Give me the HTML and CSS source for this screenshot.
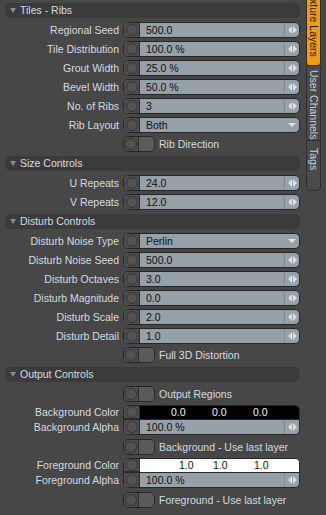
FILE: index.html
```html
<!DOCTYPE html>
<html lang="en">
<head>
    <meta charset="UTF-8">
    <title>Texture Layers</title>
    <link rel="stylesheet" href="styles.css">
</head>
<body>
<div class="app">
    <div class="panel">
        <!-- Tiles - Ribs -->
        <div class="group-head"><span class="caret"></span>Tiles - Ribs</div>
        <div class="row"><label>Regional Seed</label><div class="field"><span class="knob"></span><span class="value">500.0</span><span class="spin"><svg width="9" height="8" viewBox="0 0 9 8"><path d="M0 4 L4 0 L4 8 Z M5 0 L9 4 L5 8 Z" fill="#dde1e4"/></svg></span></div></div>
        <div class="row"><label>Tile Distribution</label><div class="field"><span class="knob"></span><span class="value">100.0 %</span><span class="spin"><svg width="9" height="8" viewBox="0 0 9 8"><path d="M0 4 L4 0 L4 8 Z M5 0 L9 4 L5 8 Z" fill="#dde1e4"/></svg></span></div></div>
        <div class="row"><label>Grout Width</label><div class="field"><span class="knob"></span><span class="value">25.0 %</span><span class="spin"><svg width="9" height="8" viewBox="0 0 9 8"><path d="M0 4 L4 0 L4 8 Z M5 0 L9 4 L5 8 Z" fill="#dde1e4"/></svg></span></div></div>
        <div class="row"><label>Bevel Width</label><div class="field"><span class="knob"></span><span class="value">50.0 %</span><span class="spin"><svg width="9" height="8" viewBox="0 0 9 8"><path d="M0 4 L4 0 L4 8 Z M5 0 L9 4 L5 8 Z" fill="#dde1e4"/></svg></span></div></div>
        <div class="row"><label>No. of Ribs</label><div class="field"><span class="knob"></span><span class="value">3</span><span class="spin"><svg width="9" height="8" viewBox="0 0 9 8"><path d="M0 4 L4 0 L4 8 Z M5 0 L9 4 L5 8 Z" fill="#dde1e4"/></svg></span></div></div>
        <div class="row"><label>Rib Layout</label><div class="field"><span class="knob"></span><span class="value">Both</span><span class="drop"></span></div></div>
        <div class="row"><label></label><div class="check"><div class="toggle"><span class="knob"></span><span class="slot"></span></div><span>Rib Direction</span></div></div>

        <!-- Size Controls -->
        <div class="group-head"><span class="caret"></span>Size Controls</div>
        <div class="row"><label>U Repeats</label><div class="field"><span class="knob"></span><span class="value">24.0</span><span class="spin"><svg width="9" height="8" viewBox="0 0 9 8"><path d="M0 4 L4 0 L4 8 Z M5 0 L9 4 L5 8 Z" fill="#dde1e4"/></svg></span></div></div>
        <div class="row"><label>V Repeats</label><div class="field"><span class="knob"></span><span class="value">12.0</span><span class="spin"><svg width="9" height="8" viewBox="0 0 9 8"><path d="M0 4 L4 0 L4 8 Z M5 0 L9 4 L5 8 Z" fill="#dde1e4"/></svg></span></div></div>

        <!-- Disturb Controls -->
        <div class="group-head"><span class="caret"></span>Disturb Controls</div>
        <div class="row"><label>Disturb Noise Type</label><div class="field"><span class="knob"></span><span class="value">Perlin</span><span class="drop"></span></div></div>
        <div class="row"><label>Disturb Noise Seed</label><div class="field"><span class="knob"></span><span class="value">500.0</span><span class="spin"><svg width="9" height="8" viewBox="0 0 9 8"><path d="M0 4 L4 0 L4 8 Z M5 0 L9 4 L5 8 Z" fill="#dde1e4"/></svg></span></div></div>
        <div class="row"><label>Disturb Octaves</label><div class="field"><span class="knob"></span><span class="value">3.0</span><span class="spin"><svg width="9" height="8" viewBox="0 0 9 8"><path d="M0 4 L4 0 L4 8 Z M5 0 L9 4 L5 8 Z" fill="#dde1e4"/></svg></span></div></div>
        <div class="row"><label>Disturb Magnitude</label><div class="field"><span class="knob"></span><span class="value">0.0</span><span class="spin"><svg width="9" height="8" viewBox="0 0 9 8"><path d="M0 4 L4 0 L4 8 Z M5 0 L9 4 L5 8 Z" fill="#dde1e4"/></svg></span></div></div>
        <div class="row"><label>Disturb Scale</label><div class="field"><span class="knob"></span><span class="value">2.0</span><span class="spin"><svg width="9" height="8" viewBox="0 0 9 8"><path d="M0 4 L4 0 L4 8 Z M5 0 L9 4 L5 8 Z" fill="#dde1e4"/></svg></span></div></div>
        <div class="row"><label>Disturb Detail</label><div class="field"><span class="knob"></span><span class="value">1.0</span><span class="spin"><svg width="9" height="8" viewBox="0 0 9 8"><path d="M0 4 L4 0 L4 8 Z M5 0 L9 4 L5 8 Z" fill="#dde1e4"/></svg></span></div></div>
        <div class="row"><label></label><div class="check"><div class="toggle"><span class="knob"></span><span class="slot"></span></div><span>Full 3D Distortion</span></div></div>

        <!-- Output Controls -->
        <div class="group-head"><span class="caret"></span>Output Controls</div>
        <div class="row"><label></label><div class="check"><div class="toggle"><span class="knob"></span><span class="slot"></span></div><span>Output Regions</span></div></div>

        <div class="pair">
            <label>Background Color</label>
            <div class="field top"><span class="knob"></span><span class="swatch dark"><span>0.0</span><span>0.0</span><span>0.0</span></span></div>
            <label>Background Alpha</label>
            <div class="field bottom"><span class="knob"></span><span class="value">100.0 %</span><span class="spin"><svg width="9" height="8" viewBox="0 0 9 8"><path d="M0 4 L4 0 L4 8 Z M5 0 L9 4 L5 8 Z" fill="#dde1e4"/></svg></span></div>
        </div>
        <div class="row"><label></label><div class="check"><div class="toggle"><span class="knob"></span><span class="slot"></span></div><span>Background - Use last layer</span></div></div>

        <div class="pair">
            <label>Foreground Color</label>
            <div class="field top"><span class="knob"></span><span class="swatch light"><span>1.0</span><span>1.0</span><span>1.0</span></span></div>
            <label>Foreground Alpha</label>
            <div class="field bottom"><span class="knob"></span><span class="value">100.0 %</span><span class="spin"><svg width="9" height="8" viewBox="0 0 9 8"><path d="M0 4 L4 0 L4 8 Z M5 0 L9 4 L5 8 Z" fill="#dde1e4"/></svg></span></div>
        </div>
        <div class="row"><label></label><div class="check"><div class="toggle"><span class="knob"></span><span class="slot"></span></div><span>Foreground - Use last layer</span></div></div>
    </div>

    <!-- Side tabs -->
    <div class="tabs">
        <div class="tab active"><span>Texture Layers</span></div>
        <div class="tab"><span>User Channels</span></div>
        <div class="tab last"><span>Tags</span></div>
    </div>
</div>
</body>
</html>
```

FILE: styles.css
```css
* {
    box-sizing: border-box;
}

body {
    margin: 0;
    background: #474747;
    font-family: 'Liberation Sans', Arial, sans-serif;
    font-size: 10.5px;
    color: #d5dbe1;
}

.app {
    display: flex;
    width: 326px;
    height: 515px;
    overflow: hidden;
}

/* Left panel */
.panel {
    width: 302px;
    padding: 2px 2px 0 5px;
}

.group-head {
    height: 15px;
    margin: 1px 0 4px;
    padding-left: 5px;
    display: flex;
    align-items: center;
    gap: 4px;
    background: #3b3b3b;
    border-radius: 6px;
    line-height: 15px;
}

.caret {
    width: 0;
    height: 0;
    border-left: 3px solid transparent;
    border-right: 3px solid transparent;
    border-top: 5px solid #8a8a8a;
}

.row {
    display: grid;
    grid-template-columns: 114px 1fr;
    column-gap: 4px;
    height: 19px;
    padding-bottom: 3px;
}

.row label,
.pair label {
    text-align: right;
    white-space: nowrap;
    line-height: 16px;
}

/* Value fields */
.field {
    display: flex;
    height: 16px;
    border: 1px solid #262626;
    border-radius: 5px;
    background: #96a0a8;
    overflow: hidden;
}

.knob {
    flex: none;
    width: 16px;
    background: #4c4c4c;
    border-right: 1px solid #2c2c2c;
    display: flex;
    align-items: center;
    justify-content: center;
}

.knob::after {
    content: '';
    width: 10px;
    height: 10px;
    border-radius: 50%;
    border: 1px solid #363636;
    background: #525252;
}

.value {
    flex: 1;
    padding-left: 6px;
    color: #111;
    line-height: 14px;
    white-space: nowrap;
}

.spin {
    flex: none;
    width: 15px;
    border-left: 1px solid #808a92;
    display: flex;
    align-items: center;
    justify-content: center;
}

.drop {
    flex: none;
    width: 15px;
    display: flex;
    align-items: center;
    justify-content: center;
}

.drop::after {
    content: '';
    width: 0;
    height: 0;
    border-left: 4px solid transparent;
    border-right: 4px solid transparent;
    border-top: 4px solid #e2e4e6;
}

/* Toggles */
.check {
    display: flex;
    align-items: center;
    gap: 4px;
    height: 16px;
    white-space: nowrap;
}

.toggle {
    display: flex;
    width: 32px;
    height: 16px;
    border: 1px solid #262626;
    border-radius: 5px;
    overflow: hidden;
}

.toggle .knob {
    width: 15px;
}

.slot {
    flex: 1;
    background: #5a5a5a;
}

/* Color + alpha pairs */
.pair {
    display: grid;
    grid-template-columns: 114px 1fr;
    grid-template-rows: 15px 15px;
    column-gap: 4px;
    margin-bottom: 4px;
}

.pair label {
    line-height: 15px;
}

.field.top {
    height: 15px;
    border-radius: 5px 5px 0 0;
}

.field.bottom {
    height: 15px;
    border-top: none;
    border-radius: 0 0 5px 5px;
}

.field.top .knob {
    border-bottom: 1px solid #2c2c2c;
}

.swatch {
    flex: 1;
    display: flex;
    line-height: 13px;
}

.swatch span {
    width: 41px;
}

.swatch.dark {
    background: #000;
    color: #f2f2f2;
    padding-left: 31px;
}

.swatch.light {
    background: #fff;
    color: #111;
    padding-left: 39px;
}

.swatch.light span:first-child {
    width: 34px;
}

/* Side tabs */
.tabs {
    width: 24px;
    padding-left: 4px;
    display: flex;
    flex-direction: column;
}

.tab {
    width: 15px;
    display: flex;
    flex-direction: column;
    overflow: hidden;
    background: #4a4a4a;
    border: 1px solid #2c2c2c;
    border-top: none;
    color: #c9ced3;
    font-size: 10.5px;
}

.tab span {
    writing-mode: vertical-rl;
    white-space: nowrap;
    line-height: 13px;
}

.tab.active {
    height: 66px;
    justify-content: flex-end;
    padding-bottom: 8px;
    background: #f39a14;
    color: #1c1c1c;
    border-radius: 0 0 3px 3px;
}

.tab:nth-child(2) {
    height: 75px;
    padding-top: 4px;
}

.tab.last {
    height: 50px;
    padding-top: 7px;
    border-radius: 0 0 5px 5px;
}
```
